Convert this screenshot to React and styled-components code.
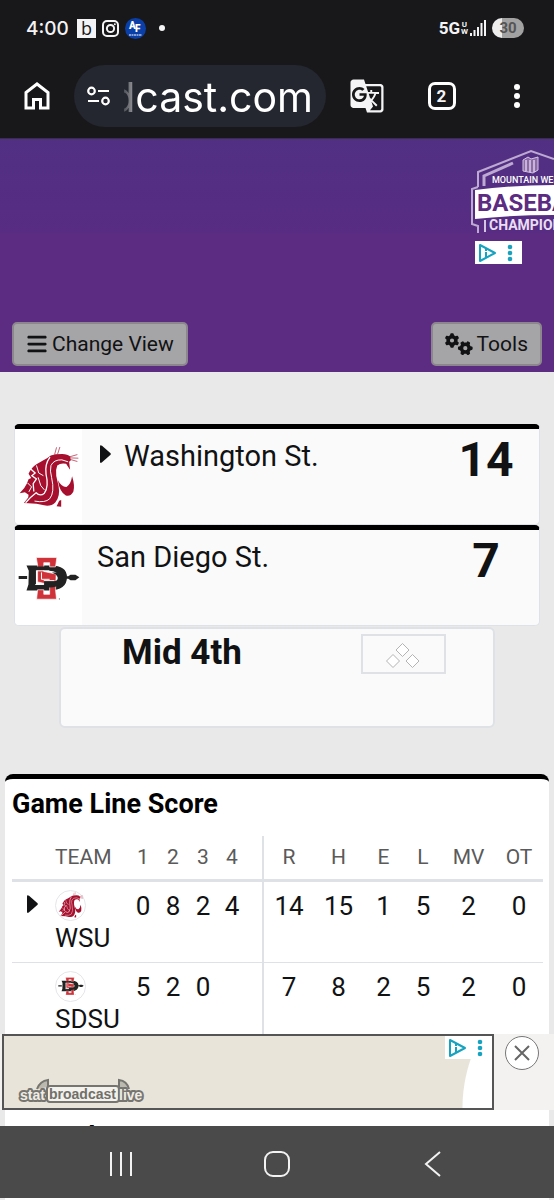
import React from "react";
import styled, { createGlobalStyle } from "styled-components";
import { FaBars, FaGears } from "react-icons/fa6";
import { MdGTranslate } from "react-icons/md";

const colors = {
  chrome: "#18181b",
  pill: "#242630",
  purple: "#5b2c82",
  page: "#e9e9e9",
  card: "#fafafa",
  line: "#dee1e6",
  text: "#111214",
  muted: "#5a5a5a",
  crimson: "#a60f2d",
  teal: "#17a2bf",
};

const GlobalStyle = createGlobalStyle`
  * {
    box-sizing: border-box;
  }
  body {
    margin: 0;
    font-family: Roboto, "Liberation Sans", sans-serif;
    color: ${colors.text};
    background-color: ${colors.page};
  }
  button {
    font-family: inherit;
    color: inherit;
    cursor: pointer;
  }
`;

const Screen = styled.div`
  height: 100vh;
  display: flex;
  flex-direction: column;
  overflow: hidden;
`;

const PhoneTop = styled.header`
  flex: none;
  background-color: ${colors.chrome};
  color: #f4f4f6;
`;

const StatusBar = styled.div`
  height: 56px;
  padding: 0 30px 0 26px;
  display: flex;
  align-items: center;
  justify-content: space-between;
`;

const StatusGroup = styled.div`
  display: flex;
  align-items: center;
  gap: ${(props) => props.$gap};
`;

const Clock = styled.span`
  font-family: Inter, Roboto, sans-serif;
  font-size: 19px;
  font-weight: 500;
  margin-right: 2px;
`;

const Network = styled.span`
  font-size: 17px;
  font-weight: 700;
`;

const NetworkSuffix = styled.span`
  display: flex;
  flex-direction: column;
  font-size: 8px;
  line-height: 7px;
  font-weight: 700;
  text-align: center;
`;

const Battery = styled.span`
  width: 32px;
  height: 20px;
  margin-left: 4px;
  border-radius: 10px;
  background: linear-gradient(to right, #ededed 30%, #a2a2a2 30%);
  color: #555;
  font-size: 15px;
  line-height: 20px;
  font-weight: 700;
  text-align: center;
`;

const AddressRow = styled.div`
  height: 83px;
  padding-bottom: 2px;
  display: flex;
  align-items: center;
  border-bottom: 1px solid #37304a;
`;

const ChromeButton = styled.button`
  width: ${(props) => props.$width};
  height: 48px;
  padding: 0;
  flex: none;
  border: none;
  background: transparent;
  display: flex;
  align-items: center;
  justify-content: center;
`;

const AddressPill = styled.div`
  flex: 1;
  min-width: 0;
  height: 62px;
  margin-right: 3px;
  padding: 0 13px;
  border-radius: 31px;
  background-color: ${colors.pill};
  display: flex;
  align-items: center;
  gap: 14px;
`;

const AddressInput = styled.input`
  flex: 1;
  min-width: 0;
  padding: 2px 0 0;
  border: none;
  outline: none;
  background: transparent;
  color: #fff;
  font-family: Inter, Roboto, sans-serif;
  font-size: 41px;
  line-height: 52px;
  direction: rtl;
  mask-image: linear-gradient(to right, rgba(0, 0, 0, 0.2), rgba(0, 0, 0, 0.6) 12px, #000 14px);
`;

const TabCount = styled.span`
  width: 28px;
  height: 28px;
  border: 3px solid #fff;
  border-radius: 7px;
  font-size: 17px;
  line-height: 22px;
  font-weight: 700;
`;

const Content = styled.main`
  flex: 1;
  min-height: 0;
  overflow-y: auto;
  scrollbar-width: none;
`;

const Banner = styled.section`
  height: 233px;
  display: flex;
  flex-direction: column;
  background-color: ${colors.purple};
`;

const BannerAd = styled.a`
  height: 94px;
  padding-top: 9px;
  display: flex;
  justify-content: flex-end;
  overflow: hidden;
  background: linear-gradient(to bottom, #513083, #572c82);
`;

const AdChoices = styled.a`
  width: 47px;
  height: 23px;
  background-color: #fff;
  display: flex;
  align-items: center;
  justify-content: center;
`;

const BannerChoices = styled.div`
  padding: 8px 32px 0 0;
  display: flex;
  justify-content: flex-end;
`;

const BannerButtons = styled.div`
  margin-top: auto;
  padding: 0 12px 6px;
  display: flex;
  justify-content: space-between;
`;

const MenuButton = styled.button`
  height: 44px;
  padding: 0 12px;
  border: 2px solid #8b878c;
  border-radius: 5px;
  background-color: #a5a4a6;
  font-size: 21px;
  line-height: 30px;
  display: flex;
  align-items: center;
  gap: 4px;
`;

const Scoreboard = styled.section`
  padding: 52px 14px 46px;
`;

const TeamCard = styled.article`
  min-height: 101px;
  border: 1px solid ${colors.line};
  border-top: 5px solid #000;
  border-radius: 5px;
  background-color: ${colors.card};
  display: flex;
  overflow: hidden;
`;

const LogoCell = styled.div`
  width: 67px;
  background-color: #fff;
  display: flex;
  align-items: center;
  justify-content: center;
`;

const TeamName = styled.h2`
  flex: 1;
  margin: 0;
  padding: 11px 0 0 15px;
  font-size: 29px;
  line-height: 32px;
  font-weight: 400;
  display: flex;
  align-items: flex-start;
  gap: 7px;
`;

const TeamScore = styled.strong`
  width: 106px;
  padding-top: 3px;
  font-size: 48px;
  line-height: 56px;
  font-weight: 700;
  text-align: center;
`;

const InningCard = styled.div`
  min-height: 101px;
  margin: 1px 45px 0;
  padding: 5px 47px 0 61px;
  border: 2px solid ${colors.line};
  border-radius: 6px;
  background-color: ${colors.card};
  display: flex;
  align-items: flex-start;
  justify-content: space-between;
`;

const Inning = styled.p`
  margin: 0;
  font-size: 35px;
  line-height: 38px;
  font-weight: 700;
`;

const Bases = styled.div`
  width: 85px;
  height: 40px;
  border: 2px solid ${colors.line};
`;

const LineScoreCard = styled.section`
  margin: 0 5px;
  padding: 8px 7px 120px;
  border-top: 5px solid #000;
  border-radius: 8px 8px 0 0;
  background-color: #fff;
`;

const CardTitle = styled.h3`
  margin: 0;
  color: #000;
  font-size: 27px;
  line-height: 34px;
  font-weight: 700;
`;

const LineTable = styled.table`
  width: 100%;
  margin: 15px 0 76px;
  table-layout: fixed;
  border-collapse: collapse;
`;

const Column = styled.col`
  width: ${(props) => props.$width}px;
`;

const HeadCell = styled.th`
  height: 44px;
  padding: 0 ${(props) => (props.$last ? "16px" : "0")} 0 0;
  border-bottom: 3px solid ${colors.line};
  border-left: ${(props) => (props.$divided ? `2px solid ${colors.line}` : "none")};
  color: ${colors.muted};
  font-size: 21px;
  font-weight: 400;
  text-align: ${(props) => props.$align || "center"};
`;

const Cell = styled.td`
  padding: 8px ${(props) => (props.$last ? "16px" : "0")} 8px 0;
  border-bottom: 1px solid ${colors.line};
  border-left: ${(props) => (props.$divided ? `2px solid ${colors.line}` : "none")};
  font-size: 26px;
  line-height: 32px;
  text-align: ${(props) => props.$align || "center"};
  vertical-align: top;
`;

const RoundLogo = styled.span`
  width: 31px;
  height: 31px;
  margin-bottom: 1px;
  border: 1px solid #e6e6ea;
  border-radius: 50%;
  display: flex;
  align-items: center;
  justify-content: center;
`;

const CaretIcon = styled.svg`
  width: 11px;
  height: 18px;
  margin: 5px 6px 0 3px;
  vertical-align: top;
  fill: currentColor;
`;

const StickyAd = styled.aside`
  position: fixed;
  left: 0;
  right: 0;
  bottom: 90px;
  height: 76px;
  padding-left: 2px;
  background-color: #f3f2f1;
  display: flex;
`;

const StickyAdBody = styled.div`
  flex: 1;
  border: 2px solid #555;
  background: radial-gradient(circle 150px at calc(100% + 120px) 100%, #fff 149px, #e8e4da 150px);
  display: flex;
  align-items: flex-end;
  justify-content: space-between;
`;

const SponsorLink = styled.a`
  padding: 0 0 3px 13px;
  display: flex;
`;

const ChoicesCorner = styled.div`
  align-self: flex-start;
`;

const CloseButton = styled.button`
  width: 34px;
  height: 34px;
  margin: 2px 15px 0 11px;
  padding: 0;
  border: 1px solid #777;
  border-radius: 50%;
  background-color: #fff;
  display: flex;
  align-items: center;
  justify-content: center;
`;

const NavBar = styled.nav`
  position: fixed;
  left: 0;
  right: 0;
  bottom: 2px;
  height: 72px;
  padding: 4px 43px 0;
  background-color: #4a4a4a;
  display: flex;
`;

const NavButton = styled.button`
  flex: 1;
  border: none;
  background: transparent;
  display: flex;
  align-items: center;
  justify-content: center;
`;

const Caret = () => (
  <CaretIcon viewBox="0 0 11 18" aria-hidden="true">
    <path d="M0 1.500 Q0 -.8 2 .8 L10.300 8 Q11.300 9 10.300 10 L2 17.300 Q0 18.800 0 16.500 Z" />
  </CaretIcon>
);

const CougarLogo = ({ size }) => (
  <svg width={size} height={size} viewBox="52 44 186 188" fill={colors.crimson} role="img" aria-label="Washington State">
    <path d="M56 187 L70 171 L78 158 L83 145 L91 141 L83 128 Q92 108 107 99 L128 87 L139 81 Q149 71 165 69 L185 68 Q202 69 209 76 L211 88 L206 92 L209 116 Q201 105 197 98 Q181 94 170 103 Q164 117 167 135 L174 165 Q180 196 164 215 Q151 228 130 224 L107 219 L69 217 L82 200 L83 192 L72 184 Z" />
    <path d="M172 148 Q183 169 198 168 Q211 162 215 136 Q224 164 219 182 Q211 198 196 194 Q177 184 172 148 Z" />
    <path d="M168 227 L176 210 L182 208 L182 228 Z" />
    <g fill="none" stroke="#fff" strokeWidth="3">
      <path d="M148 78 Q132 99 136 129 Q145 167 131 187 Q118 198 106 186 Q90 198 74 216" strokeWidth="4" />
      <path d="M151 103 Q160 85 184 86 L203 92" />
      <path d="M151 103 Q147 119 153 140 Q163 185 147 204 Q134 217 101 211" />
      <path d="M107 103 L114 126 L128 134 M112 139 L120 164 L131 177" />
      <path d="M88 112 L103 126 L93 134 L107 144 L97 158 L99 182" strokeWidth="4" />
      <path d="M80 156 L92 168 L84 183" />
    </g>
    <g fill="none" stroke={colors.crimson} strokeWidth="2">
      <path d="M162 70 L168 48 M171 69 L178 47 M207 77 L231 70 M207 80 L234 81 M207 84 L231 91" />
    </g>
  </svg>
);

const AztecLogo = ({ size }) => (
  <svg width={size} height={size} viewBox="50 347 190 190" role="img" aria-label="San Diego State">
    <path d="M52 436 H78 V445 H52 Z M194 437 H204 L211 432 H226 L238 440 L226 449 H211 L204 444 H194 Z" fill="#222" />
    <path d="M76 404 H145 Q200 402 200 440 Q200 480 145 480 H76 L82 462 L83 420 Z" fill="#222" />
    <path d="M105 420 H145 Q174 420 174 440 Q174 463 145 463 H105 Z" fill="#fff" />
    <path
      d="M106 379 H169 L165 408 H147 V395 H129 V422 L167 430 L165 478 L168 507 H107 L110 478 H129 V492 H147 V462 L110 454 V403 Z"
      fill="#cf3339"
      stroke="#fff"
      strokeWidth="2"
    />
    <path d="M88 407 H145 V418 H103 V465 H91 Z M130 451 H166 Q178 443 166 431 L154 425 H183 Q194 440 181 457 Q170 471 147 471 H130 Z" fill="#222" />
    <path d="M105 420 H146 M129 450 H162 M122 425 V446 H147 M103 462 H129" stroke="#fff" strokeWidth="3" fill="none" />
    <circle cx="177" cy="506" r="2" fill="#777" />
  </svg>
);

const ChampionshipLogo = () => (
  <svg width="83" height="86" viewBox="0 0 83 86" role="img" aria-label="Mountain West Baseball Championship">
    <g fill="none" stroke="#bda9d2">
      <path d="M7 39 V24 L60 3 L83 11" strokeWidth="2" />
      <path d="M13 38 V28 L42 15" strokeWidth="3" />
      <path d="M7 39 L1 41 V76 L7 78 V85" strokeWidth="2" />
    </g>
    <path d="M52 12 L57 9 L60 11 L67 9 V22 L62 25 L52 23 Z" fill="#8d6baa" stroke="#d4c5e2" />
    <path d="M55 12 V23 M59 12 V24 M63 12 V24" stroke="#fff" />
    <path d="M4 42 Q42 37 83 37 V67 Q40 67 4 71 Z" fill="#fff" />
    <g fontFamily="Roboto, sans-serif" fontWeight="900">
      <text x="21" y="35" fill="#fff" fontSize="9" fontWeight="500">MOUNTAIN WEST</text>
      <text x="6" y="63" fill={colors.purple} fontSize="24" fontWeight="700">BASEBALL</text>
      <text x="18" y="82" fill="#e9def2" fontSize="14" fontWeight="700">CHAMPIONSHIP</text>
    </g>
    <path d="M14 72 V84" stroke="#d4c5e2" strokeWidth="2" />
  </svg>
);

const AdChoicesIcon = () => (
  <AdChoices href="#choices" aria-label="Ad choices">
    <svg width="44" height="20" viewBox="0 0 44 20" fill="none" stroke={colors.teal} strokeWidth="2">
      <path d="M3 2 V18 L18 10 Z" strokeLinejoin="round" />
      <path d="M9 9 V14 M9 6 V8" />
      <g fill={colors.teal} stroke="none">
        <circle cx="33" cy="4" r="2.300" />
        <circle cx="33" cy="10" r="2.300" />
        <circle cx="33" cy="16" r="2.300" />
      </g>
    </svg>
  </AdChoices>
);

const StatBroadcastLogo = () => (
  <svg width="128" height="28" viewBox="0 0 128 28" role="img" aria-label="StatBroadcast Live">
    <path d="M20 12 Q23 4 31 3 V10 M112 12 Q110 4 102 3 V10" fill="#bcb9b0" stroke="#77756f" strokeWidth="2" />
    <rect x="30" y="9" width="72" height="16" rx="3" fill="#f4f2ec" stroke="#77756f" strokeWidth="2" />
    <g fontFamily="Liberation Sans, sans-serif" fontWeight="700" fontSize="14" paintOrder="stroke" strokeLinejoin="round">
      <text x="3" y="23" fill="#efede6" stroke="#77756f" strokeWidth="4">stat</text>
      <text x="32" y="22" fill="#716f6a">broadcast</text>
      <text x="102" y="23" fill="#efede6" stroke="#77756f" strokeWidth="4">live</text>
    </g>
  </svg>
);

const teams = [
  { code: "WSU", name: "Washington St.", score: 14, Logo: CougarLogo, batting: true, innings: [0, 8, 2, 4], totals: [14, 15, 1, 5, 2, 0] },
  { code: "SDSU", name: "San Diego St.", score: 7, Logo: AztecLogo, batting: false, innings: [5, 2, 0, ""], totals: [7, 8, 2, 5, 2, 0] },
];

const innings = [1, 2, 3, 4];
const totals = ["R", "H", "E", "L", "MV", "OT"];
const columnWidths = [43, 73, 30, 30, 30, 45, 51, 49, 41, 38, 53, 48];

const PhoneHeader = () => (
  <PhoneTop>
    <StatusBar>
      <StatusGroup $gap="6px">
        <Clock>4:00</Clock>
        <svg width="19" height="19" viewBox="0 0 19 19">
          <rect width="19" height="19" fill="#f4f4f6" />
          <text x="4" y="16" fontSize="18" fontFamily="Open Sans, sans-serif" fill="#18181b">b</text>
        </svg>
        <svg width="17" height="17" viewBox="0 0 17 17" fill="none" stroke="#f4f4f6" strokeWidth="2">
          <rect x="1" y="1" width="15" height="15" rx="4" />
          <circle cx="8.5" cy="8.5" r="3.6" />
          <circle cx="12.8" cy="4.2" r="1" fill="#f4f4f6" stroke="none" />
        </svg>
        <svg width="21" height="21" viewBox="0 0 21 21" fill="#fff" fontFamily="Roboto, sans-serif" fontWeight="900">
          <circle cx="10.5" cy="10.5" r="10.5" fill="#0b3fa8" />
          <text x="4" y="11" fontSize="10">A</text>
          <text x="10" y="14" fontSize="10">F</text>
          <path d="M4 17 H17" stroke="#fff" strokeDasharray="2 .5" />
        </svg>
        <svg width="24" height="8" viewBox="0 0 24 8">
          <circle cx="10" cy="4" r="3" fill="#f4f4f6" />
        </svg>
      </StatusGroup>
      <StatusGroup $gap="1px">
        <Network>5G</Network>
        <NetworkSuffix>
          <span>U</span>
          <span>W</span>
        </NetworkSuffix>
        <svg width="18" height="18" viewBox="0 0 18 18" stroke="#f4f4f6" strokeWidth="2">
          <path d="M2 17 V14 M5.5 17 V11 M9 17 V8 M12.500 17 V4 M16 17 V1" />
        </svg>
        <Battery>30</Battery>
      </StatusGroup>
    </StatusBar>
    <AddressRow>
      <ChromeButton $width="74px" aria-label="Home">
        <svg width="28" height="30" viewBox="0 0 28 30" fill="none" stroke="#fff" strokeWidth="3">
          <path d="M3 27 V11.500 L14 3 L25 11.500 V27 H17.500 V18.500 H10.500 V27 Z" />
        </svg>
      </ChromeButton>
      <AddressPill>
        <svg width="23" height="20" viewBox="0 0 23 20" fill="none" stroke="#fff" strokeWidth="2.200">
          <circle cx="4.500" cy="5" r="3.300" />
          <circle cx="18.500" cy="15" r="3.300" />
          <path d="M11 5 H22 M1 15 H12" />
        </svg>
        <AddressInput type="text" aria-label="Address" defaultValue="dcast.com" />
      </AddressPill>
      <ChromeButton $width="75px" aria-label="Translate">
        <MdGTranslate size={36} />
      </ChromeButton>
      <ChromeButton $width="75px" aria-label="Tabs">
        <TabCount>2</TabCount>
      </ChromeButton>
      <ChromeButton $width="75px" aria-label="More">
        <svg width="8" height="28" viewBox="0 0 8 28" fill="#fff">
          <circle cx="4" cy="5" r="3" />
          <circle cx="4" cy="14" r="3" />
          <circle cx="4" cy="23" r="3" />
        </svg>
      </ChromeButton>
    </AddressRow>
  </PhoneTop>
);

const LineScore = () => (
  <LineTable>
    <colgroup>
      {columnWidths.map((width, i) => (
        <Column key={i} $width={width} />
      ))}
    </colgroup>
    <thead>
      <tr>
        <HeadCell />
        <HeadCell $align="left">TEAM</HeadCell>
        {innings.map((inning) => (
          <HeadCell key={inning} $last={inning === 4}>{inning}</HeadCell>
        ))}
        {totals.map((total, i) => (
          <HeadCell key={total} $divided={i === 0}>{total}</HeadCell>
        ))}
      </tr>
    </thead>
    <tbody>
      {teams.map(({ code, Logo, batting, ...team }) => (
        <tr key={code}>
          <Cell>{batting && <Caret />}</Cell>
          <Cell $align="left">
            <RoundLogo>
              <Logo size={26} />
            </RoundLogo>
            {code}
          </Cell>
          {team.innings.map((runs, i) => (
            <Cell key={i} $last={i === 3}>{runs}</Cell>
          ))}
          {team.totals.map((value, i) => (
            <Cell key={i} $divided={i === 0}>{value}</Cell>
          ))}
        </tr>
      ))}
    </tbody>
  </LineTable>
);

const App = () => {
  return (
    <Screen>
      <GlobalStyle />
      <PhoneHeader />
      <Content>
        <Banner>
          <BannerAd href="#championship">
            <ChampionshipLogo />
          </BannerAd>
          <BannerChoices>
            <AdChoicesIcon />
          </BannerChoices>
          <BannerButtons>
            <MenuButton>
              <FaBars size={22} />
              Change View
            </MenuButton>
            <MenuButton>
              <FaGears size={28} />
              Tools
            </MenuButton>
          </BannerButtons>
        </Banner>
        <Scoreboard>
          {teams.map(({ code, name, score, Logo, batting }) => (
            <TeamCard key={code}>
              <LogoCell>
                <Logo size={62} />
              </LogoCell>
              <TeamName>
                {batting && <Caret />}
                {name}
              </TeamName>
              <TeamScore>{score}</TeamScore>
            </TeamCard>
          ))}
          <InningCard>
            <Inning>Mid 4th</Inning>
            <Bases>
              <svg width="81" height="36" viewBox="0 0 81 36" fill="#fff" stroke="#b4b4b4" role="img" aria-label="Bases empty">
                <path d="M39.500 7.500 L46 14 L39.500 20.500 L33 14 Z M30 18.500 L36.500 25 L30 31.500 L23.500 25 Z M49.500 18.500 L56 25 L49.500 31.500 L43 25 Z" />
              </svg>
            </Bases>
          </InningCard>
        </Scoreboard>
        <LineScoreCard>
          <CardTitle>Game Line Score</CardTitle>
          <LineScore />
          <CardTitle>Last Play</CardTitle>
        </LineScoreCard>
      </Content>
      <StickyAd>
        <StickyAdBody>
          <SponsorLink href="#statbroadcast">
            <StatBroadcastLogo />
          </SponsorLink>
          <ChoicesCorner>
            <AdChoicesIcon />
          </ChoicesCorner>
        </StickyAdBody>
        <CloseButton aria-label="Close ad">
          <svg width="18" height="18" viewBox="0 0 18 18" stroke="#666" strokeWidth="2">
            <path d="M2 2 L16 16 M16 2 L2 16" />
          </svg>
        </CloseButton>
      </StickyAd>
      <NavBar>
        <NavButton aria-label="Recent apps">
          <svg width="26" height="26" viewBox="0 0 26 26" stroke="#f2f2f2" strokeWidth="2">
            <path d="M3 1 V25 M13 1 V25 M23 1 V25" />
          </svg>
        </NavButton>
        <NavButton aria-label="Home screen">
          <svg width="26" height="26" viewBox="0 0 26 26" fill="none" stroke="#f2f2f2" strokeWidth="2">
            <rect x="1" y="1" width="24" height="24" rx="8" />
          </svg>
        </NavButton>
        <NavButton aria-label="Back">
          <svg width="26" height="26" viewBox="0 0 26 26" fill="none" stroke="#f2f2f2" strokeWidth="2">
            <path d="M20 1 L6 13 L20 25" />
          </svg>
        </NavButton>
      </NavBar>
    </Screen>
  );
};

export default App;
